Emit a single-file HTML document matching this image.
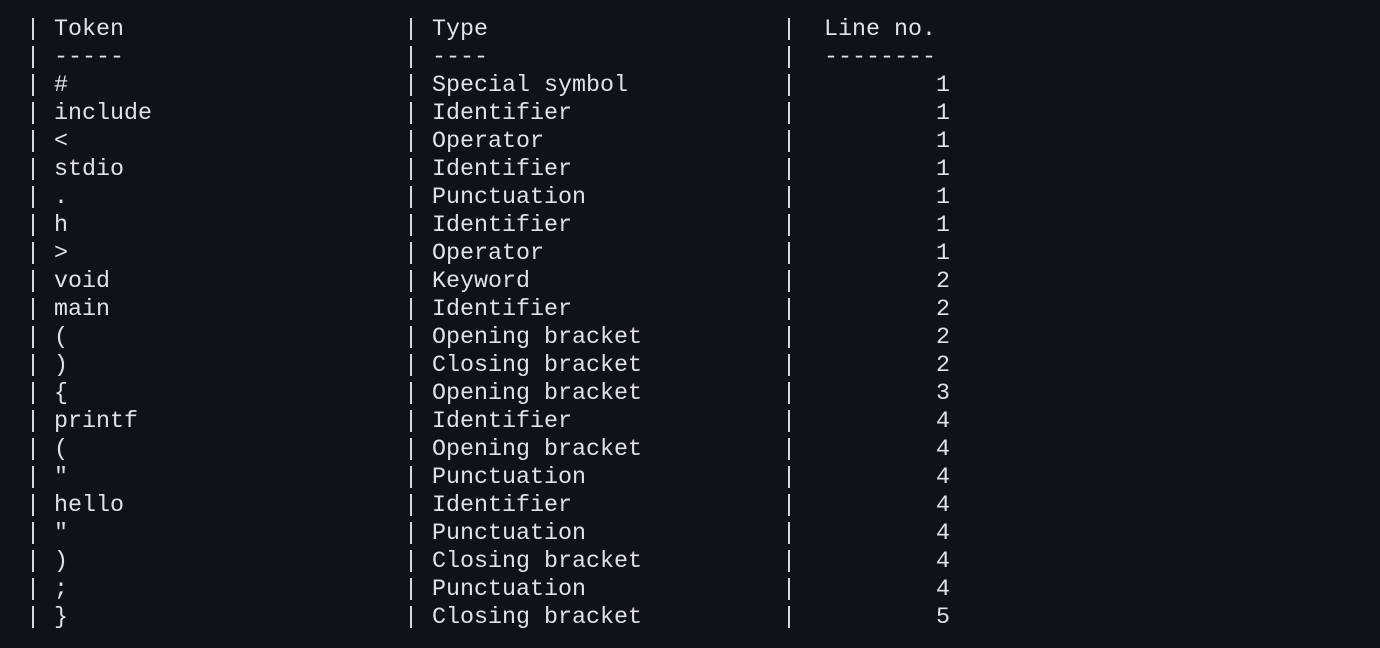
<!DOCTYPE html>
<html><head><meta charset="utf-8"><style>
html,body{margin:0;padding:0;background:#0f1218;width:1380px;height:648px;overflow:hidden}
pre{position:absolute;left:26px;top:16px;margin:0;font-family:"Liberation Mono",monospace;font-size:23.33px;line-height:28px;color:#dfe3e8;white-space:pre}
</style></head><body>
<pre>| Token                    | Type                     |  Line no.
| -----                    | ----                     |  --------
| #                        | Special symbol           |          1
| include                  | Identifier               |          1
| &lt;                        | Operator                 |          1
| stdio                    | Identifier               |          1
| .                        | Punctuation              |          1
| h                        | Identifier               |          1
| &gt;                        | Operator                 |          1
| void                     | Keyword                  |          2
| main                     | Identifier               |          2
| (                        | Opening bracket          |          2
| )                        | Closing bracket          |          2
| {                        | Opening bracket          |          3
| printf                   | Identifier               |          4
| (                        | Opening bracket          |          4
| "                        | Punctuation              |          4
| hello                    | Identifier               |          4
| "                        | Punctuation              |          4
| )                        | Closing bracket          |          4
| ;                        | Punctuation              |          4
| }                        | Closing bracket          |          5</pre>
</body></html>
